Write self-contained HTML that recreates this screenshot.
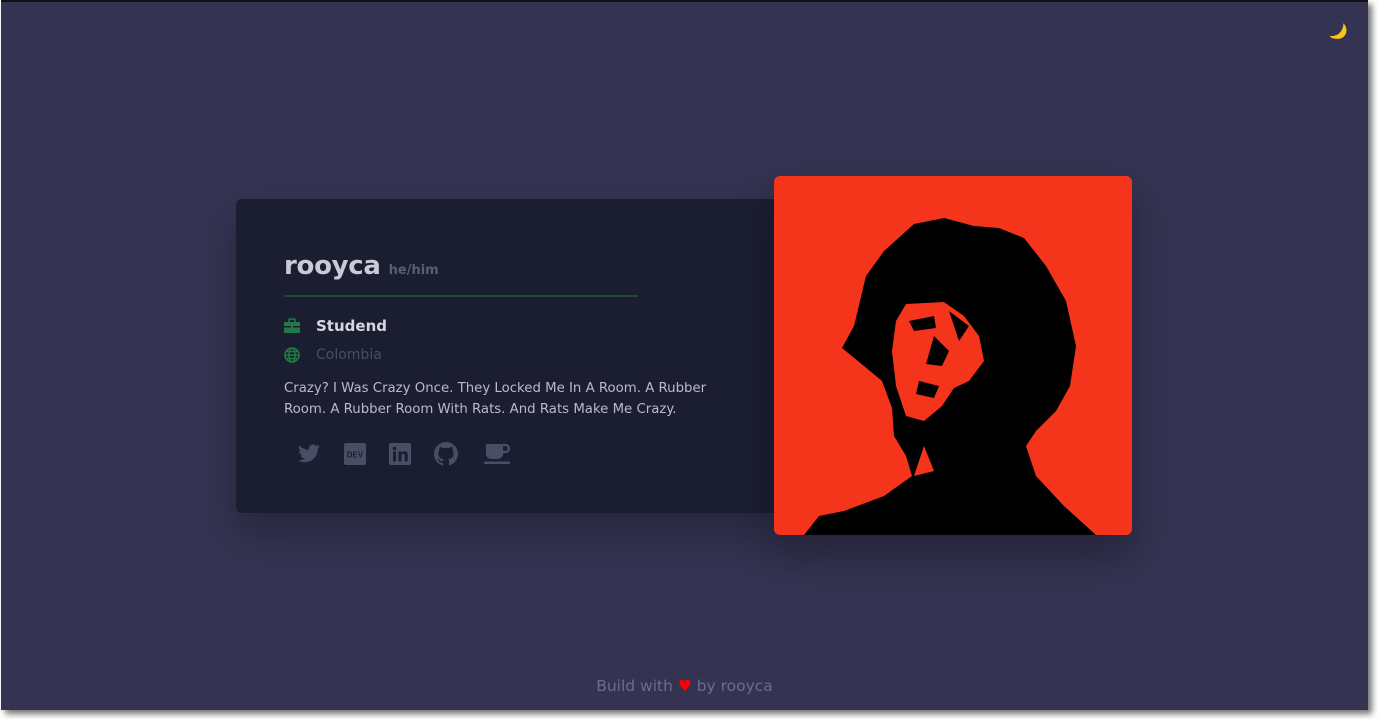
<!DOCTYPE html>
<html><head><meta charset="utf-8"><style>
*{margin:0;padding:0;box-sizing:border-box}
html,body{width:1378px;height:719px;background:#fff;overflow:hidden;font-family:"Liberation Sans","DejaVu Sans",sans-serif}
#win{position:absolute;left:1px;top:0;width:1367px;height:710px;background:#343352;border-top:2px solid #111;box-shadow:4px 4px 6px rgba(0,0,0,.55)}
.card{position:absolute;left:235px;top:197px;width:560px;height:314px;background:#1b1e31;border-radius:6px;box-shadow:0 20px 40px rgba(0,0,0,.25)}
.name{position:absolute;left:48px;top:52px;color:#c9cad6;font-size:26px;font-weight:bold;font-family:"DejaVu Sans",sans-serif;letter-spacing:-0.3px}
.name small{font-size:13px;color:#5b5d75;margin-left:8px;letter-spacing:0}
.line{position:absolute;left:48px;top:96px;width:354px;height:2px;background:#1f4a35}
.row{position:absolute;left:48px;display:flex;align-items:center;font-family:"DejaVu Sans",sans-serif}
.row span{margin-left:16px}
.bio{position:absolute;left:48px;top:179px;width:460px;color:#b9bacb;font-size:13.3px;line-height:21px;font-family:"DejaVu Sans",sans-serif;letter-spacing:0}
.icons{position:absolute;left:60px;top:243px}
.icons svg{position:absolute}
.photo{position:absolute;left:773px;top:174px;width:358px;height:359px;border-radius:6px;overflow:hidden;background:#f5341c;box-shadow:0 20px 40px rgba(0,0,0,.3)}
.foot{position:absolute;left:0;width:1367px;top:675px;text-align:center;color:#6a6d8c;font-size:15.5px;font-family:"DejaVu Sans",sans-serif}
</style></head><body>
<div id="win">
<div style="position:absolute;left:1327px;top:19px">
<svg width="22" height="22" viewBox="0 0 20 20"><path d="M14 2 C20 8 16 18 6 16 C4 16 2.5 15 1.5 13.5 C8 14.5 14 10 14 2Z" fill="#f5c518"/></svg></div>
<div class="card">
<div class="name">rooyca<small>he/him</small></div>
<div class="line"></div>
<div class="row" style="top:118px;color:#d4d5e0;font-weight:bold;font-size:15px">
<svg width="16" height="16" viewBox="0 0 16 16"><rect x="0" y="4" width="16" height="11" rx="1.5" fill="#1f7a45"/><rect x="5" y="1" width="6" height="4" rx="1" fill="none" stroke="#1f7a45" stroke-width="1.6"/><rect x="0" y="8" width="16" height="1.5" fill="#1b1e31"/><rect x="7" y="7" width="2" height="3" fill="#1f7a45"/></svg><span>Studend</span></div>
<div class="row" style="top:148px;color:#4a4d64;font-size:14px">
<svg width="16" height="16" viewBox="0 0 16 16" fill="none" stroke="#1f7a45" stroke-width="1.6"><circle cx="8" cy="8" r="7"/><ellipse cx="8" cy="8" rx="3" ry="7"/><path d="M1 8H15M2 4.5H14M2 11.5H14"/></svg><span>Colombia</span></div>
<div class="bio">Crazy? I Was Crazy Once. They Locked Me In A Room. A Rubber Room. A Rubber Room With Rats. And Rats Make Me Crazy.</div>
<div class="icons">
<svg width="26" height="24" viewBox="0 0 24 24" style="left:0;top:0"><path fill="#4a4d64" d="M23 4.6c-.8.4-1.7.6-2.6.7.9-.6 1.6-1.4 2-2.5-.9.5-1.9.9-2.9 1.1A4.5 4.5 0 0 0 11.8 8 12.8 12.8 0 0 1 2.5 3.3a4.5 4.5 0 0 0 1.4 6c-.7 0-1.4-.2-2-.6 0 2.2 1.6 4 3.6 4.4-.7.2-1.4.2-2 .1.6 1.8 2.2 3.1 4.2 3.1A9 9 0 0 1 1 18.2 12.8 12.8 0 0 0 7.9 20.2c8.3 0 12.8-6.9 12.8-12.8v-.6c.9-.6 1.6-1.4 2.3-2.2z"/></svg>
<svg width="22" height="22" viewBox="0 0 22 22" style="left:48px;top:1px"><rect width="22" height="22" rx="2" fill="#4a4d64"/><text x="11" y="14.5" font-size="8" font-weight="bold" text-anchor="middle" fill="#1b1e31" font-family="Liberation Sans">DEV</text></svg>
<svg width="22" height="22" viewBox="0 0 22 22" style="left:93px;top:1px"><rect width="22" height="22" rx="2" fill="#4a4d64"/><rect x="4" y="8.5" width="3" height="10" fill="#1b1e31"/><circle cx="5.5" cy="5.5" r="1.8" fill="#1b1e31"/><path d="M9.5 8.5h3v1.5c.6-1 1.7-1.8 3.2-1.8 2.3 0 3 1.5 3 3.8v6.5h-3v-5.8c0-1.2-.3-2-1.4-2s-1.8.8-1.8 2v5.8h-3z" fill="#1b1e31"/></svg>
<svg width="24" height="24" viewBox="0 0 16 16" style="left:138px;top:0"><path fill="#4a4d64" d="M8 0C3.6 0 0 3.6 0 8c0 3.5 2.3 6.5 5.5 7.6.4.1.5-.2.5-.4v-1.4c-2.2.5-2.700-1-2.700-1-.4-.9-.9-1.2-.9-1.2-.7-.5.1-.5.1-.5.8.1 1.2.8 1.2.8.7 1.2 1.9.9 2.3.7.1-.5.3-.9.5-1.1-1.8-.2-3.6-.9-3.600-4 0-.9.3-1.6.8-2.1-.1-.2-.4-1 .1-2.1 0 0 .7-.2 2.2.8.6-.2 1.3-.3 2-.3s1.4.1 2 .3c1.5-1 2.2-.8 2.2-.8.4 1.1.2 1.900.1 2.1.5.6.8 1.3.8 2.1 0 3.1-1.9 3.7-3.6 3.9.3.3.5.8.5 1.5v2.2c0 .2.1.5.6.4A8 8 0 0 0 16 8c0-4.4-3.6-8-8-8z"/></svg>
<svg width="30" height="24" viewBox="0 0 28 24" style="left:186px;top:0"><path d="M3 2h17v10a5 5 0 0 1-5 5H8a5 5 0 0 1-5-5z" fill="#4a4d64"/><path d="M20 3h2.5a3.5 3.5 0 0 1 0 7H20" fill="none" stroke="#4a4d64" stroke-width="2.4"/><rect x="1" y="19.5" width="26" height="2.5" rx="1" fill="#4a4d64"/></svg>
</div>
</div>
<div class="photo">
<svg width="358" height="359" viewBox="0 0 358 359">
<path fill="#000" d="M68 172 L80 150 L92 100 L110 75 L140 48 L170 42 L200 50 L225 52 L250 62 L272 90 L292 125 L302 170 L296 210 L282 235 L262 255 L252 270 L262 300 L290 330 L322 359 L30 359 L45 340 L70 335 L110 320 L138 300 L132 280 L120 260 L118 232 L108 205 L90 190 Z"/>
<path fill="#f5341c" d="M132 128 L170 126 L190 140 L205 160 L210 185 L195 205 L180 212 L168 230 L150 245 L132 240 L122 210 L118 175 L122 145 Z"/>
<path fill="#000" d="M135 145 L160 140 L162 152 L140 155 Z M160 160 L175 175 L168 190 L152 188 Z M145 205 L165 210 L160 222 L142 218 Z M175 135 L195 150 L185 165 Z"/>
<path fill="#f5341c" d="M140 300 L150 270 L160 295 Z"/>
</svg>
</div>
<div class="foot">Build with <span style="color:#f00">♥</span> by rooyca</div>
</div>
</body></html>
